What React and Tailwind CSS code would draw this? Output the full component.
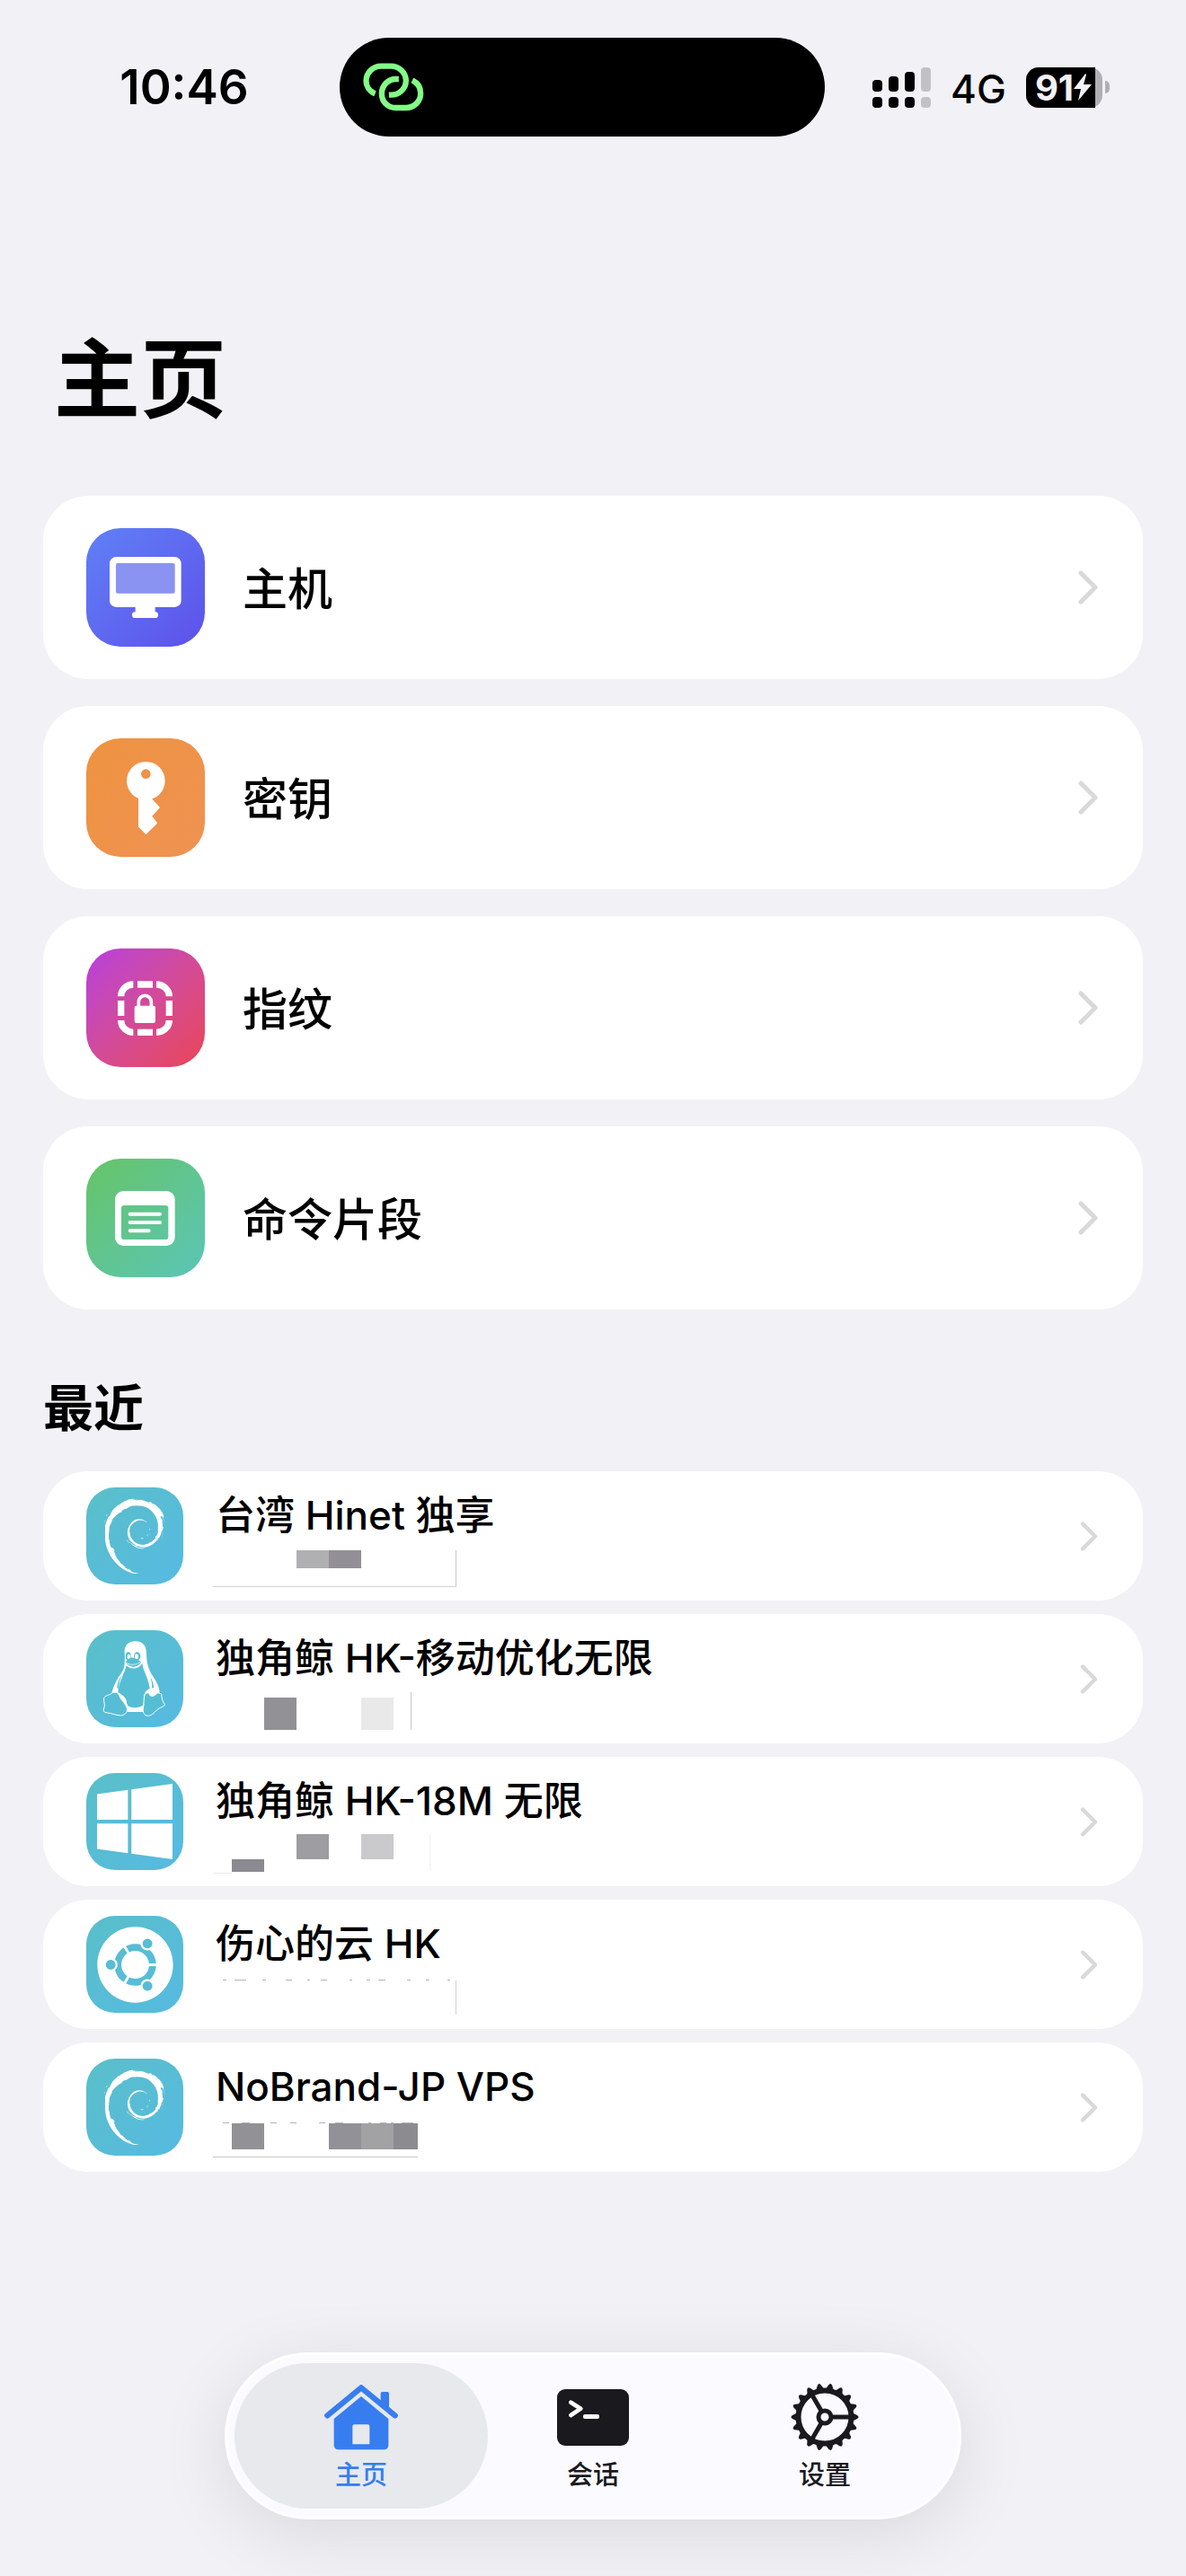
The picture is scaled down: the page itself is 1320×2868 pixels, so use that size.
import { useState } from "react";
import { FaUbuntu, FaWindows } from "react-icons/fa";
import { SiDebian } from "react-icons/si";

const menuItems = [
  { id: "hosts", label: "主机", tile: "bg-linear-to-br from-[#6080f6] to-[#5d50ea]", Icon: MonitorIcon },
  { id: "keys", label: "密钥", tile: "bg-linear-to-br from-[#ee9340] to-[#ef9253]", Icon: KeyIcon },
  { id: "fingerprints", label: "指纹", tile: "bg-linear-to-br from-[#b83ddd] via-[#d34a98] to-[#ea4453]", Icon: LockFrameIcon },
  { id: "snippets", label: "命令片段", tile: "bg-linear-to-br from-[#66c464] to-[#5bc5b6]", Icon: SnippetIcon },
];

// blocks and lines are [x, y, w, h, color], specks are [x1, x2]
const recentHosts = [
  {
    name: "台湾 Hinet 独享",
    Icon: DebianIcon,
    blocks: [[94, 3, 36, 20, "#b0b0b2"], [130, 3, 36, 20, "#929096"]],
    lines: [[271, 3, 1, 41, "#c8c8cb"], [1, 43, 271, 1, "#d2d2d4"]],
    specks: [],
  },
  {
    name: "独角鲸 HK-移动优化无限",
    Icon: TuxIcon,
    blocks: [[58, 8, 36, 36, "#929195"], [166, 8, 36, 36, "#e9e9ea"]],
    lines: [[221, 2, 1, 42, "#c8c8cb"]],
    specks: [],
  },
  {
    name: "独角鲸 HK-18M 无限",
    Icon: WindowsIcon,
    blocks: [[22, 29, 36, 14, "#8b8a90"], [94, 1, 36, 28, "#9e9da2"], [166, 1, 36, 28, "#cacacc"]],
    lines: [[242, 1, 1, 41, "#efeff0"], [1, 44, 21, 1, "#ebebec"]],
    specks: [],
  },
  {
    name: "伤心的云 HK",
    Icon: UbuntuIcon,
    blocks: [],
    lines: [[271, 5, 1, 38, "#d2d2d4"]],
    specks: [[12, 16], [25, 38], [56, 60], [82, 89], [106, 109], [121, 128], [153, 156], [172, 176], [185, 193], [217, 221], [238, 242], [262, 265]],
  },
  {
    name: "NoBrand-JP VPS",
    Icon: DebianIcon,
    blocks: [[22, 5, 36, 29, "#929195"], [130, 5, 36, 29, "#929197"], [166, 5, 36, 29, "#a2a2a4"], [202, 5, 27, 29, "#8c8b90"]],
    lines: [[1, 42, 228, 1, "#c8c8cb"]],
    specks: [[12, 19], [33, 42], [65, 72], [87, 94], [119, 126], [137, 146], [174, 177], [187, 194], [199, 202], [211, 224]],
  },
];

const tabs = [
  { id: "home", label: "主页", Icon: HouseIcon },
  { id: "sessions", label: "会话", Icon: TerminalIcon },
  { id: "settings", label: "设置", Icon: GearIcon },
];

function MonitorIcon() {
  return (
    <svg viewBox="0 0 396 396" className="size-full" fill="white" aria-hidden="true">
      <rect x="78" y="96" width="239" height="168" rx="22" />
      <rect x="99" y="117" width="197" height="101" rx="6" fill="#8a92f2" />
      <rect x="164" y="260" width="66" height="28" />
      <rect x="153" y="280" width="87" height="20" rx="10" />
    </svg>
  );
}

function KeyIcon() {
  return (
    <svg viewBox="0 0 396 396" className="size-full" fill="white" aria-hidden="true">
      <circle cx="199" cy="142" r="64" />
      <path d="M177 190V295L199 317L234 283L216 260L242 231L216 203V180Z" stroke="white" strokeWidth="6" strokeLinejoin="round" />
      <circle cx="199" cy="119" r="16" fill="#ee9348" />
    </svg>
  );
}

function LockFrameIcon() {
  return (
    <svg viewBox="0 0 396 396" className="size-full" fill="none" stroke="white" aria-hidden="true">
      <g strokeWidth="22">
        <path d="M116 160A41 40 0 0 1 157 120" />
        <path d="M234 120A43 40 0 0 1 277 160" />
        <path d="M277 240A43 40 0 0 1 234 280" />
        <path d="M157 280A41 40 0 0 1 116 240" />
        <path d="M171 120H222M171 280H222M116 174V225M277 174V225" />
      </g>
      <path d="M175 198V178A21 21 0 0 1 217 178V198" strokeWidth="11" />
      <rect x="161" y="191" width="70" height="58" rx="7" fill="white" stroke="none" />
    </svg>
  );
}

function SnippetIcon() {
  return (
    <svg viewBox="0 0 396 396" className="size-full" fill="white" aria-hidden="true">
      <path
        fillRule="evenodd"
        d="M124 108H268A28 28 0 0 1 296 136V263A28 28 0 0 1 268 291H124A28 28 0 0 1 96 263V136A28 28 0 0 1 124 108ZM127 156A10 10 0 0 0 117 166V260A10 10 0 0 0 127 270H264A10 10 0 0 0 274 260V166A10 10 0 0 0 264 156Z"
      />
      <path d="M146 185H246M146 213H246M146 241H209" stroke="white" strokeWidth="12" strokeLinecap="round" />
    </svg>
  );
}

function DebianIcon() {
  return <SiDebian className="size-[84px] text-white" aria-hidden="true" />;
}

function WindowsIcon() {
  return <FaWindows className="size-24 text-white" aria-hidden="true" />;
}

function UbuntuIcon() {
  return <FaUbuntu className="size-[87px] text-white" aria-hidden="true" />;
}

function TuxIcon() {
  return (
    <svg viewBox="18 495 324 324" className="size-full" fill="white" aria-hidden="true">
      <path d="M146 568C145 544 160 532 182 532C206 532 219 546 219 572C219 602 225 622 238 645C256 672 266 690 262 716L244 722L208 768H156L120 704L103 712C103 690 122 656 138 634C148 618 147 596 146 568Z" />
      <path d="M152 612C160 626 192 628 205 606C208 632 226 655 230 690C222 694 212 700 211 716L209 745C195 756 170 756 157 748C153 734 140 716 124 702C126 668 146 640 152 612Z" fill="#56bed4" />
      <path d="M121 688C122 670 130 654 137 645C130 660 127 674 125 690ZM231 650C240 664 243 674 243 688L237 688C239 674 236 664 231 650Z" fill="#56bed4" />
      <ellipse cx="158" cy="582" rx="9" ry="14" fill="#56bed4" />
      <ellipse cx="188" cy="582" rx="11" ry="14" fill="#56bed4" />
      <ellipse cx="160" cy="584" rx="5" ry="9" />
      <ellipse cx="186" cy="583" rx="6" ry="9" />
      <path d="M150 600C158 588 172 582 182 590C190 594 198 596 201 602C196 612 180 620 168 616C158 612 150 606 150 600Z" fill="#56bed4" />
      <path d="M151 602C160 611 178 614 200 601" fill="none" stroke="white" strokeWidth="2" />
      <g fill="#56bed4" stroke="white" strokeWidth="3" strokeLinejoin="round">
        <path d="M106 704C94 714 80 712 77 722C75 732 82 744 78 753C74 762 74 768 84 770C102 772 120 780 134 780C150 778 158 766 153 752C143 738 132 706 118 703C112 702 108 702 106 704Z" />
        <path d="M214 708C208 724 212 740 208 756C206 768 210 780 224 781C240 780 248 766 258 758C268 752 282 748 280 742C272 732 270 722 269 708C256 702 228 700 214 708Z" />
      </g>
      <path d="M122 703C138 708 154 724 153 736C148 741 136 733 131 722Z" />
      <path d="M226 698C232 688 250 690 257 704C254 706 250 714 240 717C230 716 224 708 226 698Z" />
    </svg>
  );
}

function HouseIcon() {
  return (
    <svg viewBox="0 0 264 234" className="h-[78px] w-[88px]" fill="currentColor" aria-hidden="true">
      <path d="M19 112L132 19L245 112" fill="none" stroke="currentColor" strokeWidth="19" strokeLinecap="round" strokeLinejoin="round" />
      <path d="M197 80V38Q197 33 202 33H220Q225 33 225 38V90Z" />
      <path fillRule="evenodd" d="M41 123L132 48L223 123V210Q223 226 207 226H57Q41 226 41 210ZM103 148V208H160V148Q160 142 154 142H109Q103 142 103 148Z" />
    </svg>
  );
}

function TerminalIcon() {
  return (
    <svg viewBox="0 0 240 189" className="h-[63px] w-20" aria-hidden="true">
      <rect width="240" height="189" rx="27" fill="currentColor" />
      <path d="M46 44L79 65L46 87" fill="none" stroke="white" strokeWidth="14" strokeLinecap="round" strokeLinejoin="round" />
      <rect x="87" y="84" width="54" height="15" rx="6" fill="white" />
    </svg>
  );
}

function GearIcon() {
  const teeth = Array.from({ length: 18 }, (_, i) => i * 20);
  return (
    <svg viewBox="-39 -39 78 78" className="size-[78px]" fill="none" stroke="currentColor" aria-hidden="true">
      {teeth.map((angle) => (
        <path key={angle} d="M30 -5L36 -2Q39 0 36 2L30 5Z" fill="currentColor" stroke="none" transform={`rotate(${angle})`} />
      ))}
      <circle r="29.5" strokeWidth="6" />
      <circle r="7" strokeWidth="5" />
      {[0, 120, 240].map((angle) => (
        <path key={angle} d="M8 0H28" strokeWidth="5" transform={`rotate(${angle})`} />
      ))}
    </svg>
  );
}

function Chevron({ className }) {
  return (
    <svg viewBox="0 0 22 38" className={className} fill="none" stroke="#d9d9db" strokeWidth="5" strokeLinecap="round" strokeLinejoin="round" aria-hidden="true">
      <path d="M3 3L19 19L3 35" />
    </svg>
  );
}

function StatusBar() {
  return (
    <header className="grid grid-cols-[1fr_540px_1fr] items-center pt-[42px] pr-6">
      <span className="pl-8 text-center text-[53px] leading-[64px] font-semibold">10:46</span>
      <div className="flex h-[110px] items-center rounded-full bg-black pl-[22px]">
        <svg viewBox="120 110 230 180" className="h-[60px] w-[77px]" fill="none" stroke="#83fb86" strokeWidth="19" aria-hidden="true">
          <path d="M172 222C152 214 142 196 142 180C142 152 164 130 192 130H225C253 130 275 152 275 178C275 204 253 226 225 226H218" />
          <path d="M296 177C315 186 324 203 324 221C324 248 302 269 274 269H241C213 269 194 248 194 222C194 195 215 173 241 173H251" />
        </svg>
      </div>
      <div className="flex items-center justify-center gap-[22px] pr-2">
        <svg viewBox="0 0 65 45" className="h-[45px] w-[65px]" aria-hidden="true">
          <rect x="0" y="14" width="11" height="13" rx="4" />
          <rect x="18" y="10" width="11" height="17" rx="4" />
          <rect x="36" y="5" width="11" height="22" rx="4" />
          <rect x="54" y="0" width="11" height="27" rx="4" fill="#c2c1c6" />
          <rect x="0" y="33" width="11" height="12" rx="4" />
          <rect x="18" y="33" width="11" height="12" rx="4" />
          <rect x="36" y="33" width="11" height="12" rx="4" />
          <rect x="54" y="33" width="11" height="12" rx="4" fill="#c2c1c6" />
        </svg>
        <span className="pt-[3px] text-[44px] leading-[56px] font-medium">4G</span>
        <div className="flex items-center gap-[3px]">
          <div className="h-[45px] w-[85px] rounded-[14px] bg-[#b0afb4]">
            <div className="flex h-[45px] w-[77px] items-center rounded-l-[14px] bg-black pl-[10px] text-[#f2f1f6]">
              <span className="text-[40px] leading-[45px] font-bold">91</span>
              <svg viewBox="0 0 20 30" className="h-[30px] w-5 shrink-0" fill="currentColor" aria-hidden="true">
                <path d="M13 0L0 17H8L5 30L20 12H11L14 1Z" />
              </svg>
            </div>
          </div>
          <div className="h-[14px] w-[5px] rounded-r-full bg-[#b0afb4]" />
        </div>
      </div>
    </header>
  );
}

function MaskedAddress({ blocks, lines, specks }) {
  return (
    <svg viewBox="0 0 272 46" className="mt-2 h-[46px] w-[272px]" shapeRendering="crispEdges" aria-hidden="true">
      {[...lines, ...blocks].map(([x, y, w, h, color]) => (
        <rect key={`${x}-${y}`} x={x} y={y} width={w} height={h} fill={color} />
      ))}
      {specks.map(([from, to]) => (
        <rect key={from} x={from} y="4" width={to - from} height="1" fill="#b4b4b7" />
      ))}
    </svg>
  );
}

export default function App() {
  const [activeTab, setActiveTab] = useState("home");

  return (
    <div className="flex min-h-screen flex-col bg-[#f2f1f6] font-['Inter','Noto_Sans_CJK_SC',sans-serif] text-black">
      <StatusBar />

      <main className="px-12">
        <h1 className="mt-[210px] pl-3 text-[96px] leading-[120px] font-bold">主页</h1>

        <div className="mt-[70px] flex flex-col gap-[30px]">
          {menuItems.map(({ id, label, tile, Icon }) => (
            <button key={id} className="flex h-[204px] items-center rounded-[50px] bg-white pr-[50px] pl-12 text-left">
              <span className={`size-[132px] shrink-0 overflow-hidden rounded-[38px] ${tile}`}>
                <Icon />
              </span>
              <span className="ml-[42px] flex-1 pt-1 text-[50px] leading-[72px] font-medium">{label}</span>
              <Chevron className="h-[38px] w-[22px]" />
            </button>
          ))}
        </div>

        <h2 className="mt-[74px] mb-[34px] text-[56px] leading-[72px] font-semibold">最近</h2>

        <div className="flex flex-col gap-[15px]">
          {recentHosts.map(({ name, Icon, blocks, lines, specks }) => (
            <button key={name} className="flex h-36 items-center rounded-[50px] bg-white pr-[50px] pl-12 text-left">
              <span className="flex size-[108px] shrink-0 items-center justify-center overflow-hidden rounded-[32px] bg-linear-to-br from-[#5abfc8] to-[#56bae2]">
                <Icon />
              </span>
              <span className="ml-8 flex flex-1 flex-col self-start pt-[21px]">
                <span className="pl-1 text-[44px] leading-[56px] font-medium">{name}</span>
                <MaskedAddress blocks={blocks} lines={lines} specks={specks} />
              </span>
              <Chevron className="h-[33px] w-5" />
            </button>
          ))}
        </div>
      </main>

      <nav className="mx-auto mt-auto mb-[63px] flex rounded-full border-3 border-white bg-[#fbfaff] px-2 py-[9px] shadow-[0_16px_80px_rgba(0,0,0,0.10)]">
        {tabs.map(({ id, label, Icon }) => (
          <button
            key={id}
            onClick={() => setActiveTab(id)}
            className={`-mr-6 flex h-[162px] w-[282px] flex-col items-center justify-center gap-[6px] rounded-full pt-1 last:mr-0 ${activeTab === id ? "bg-[#e7e9ec] text-[#377df0]" : "text-[#1a191e]"}`}
          >
            <span className="flex h-[78px] items-center">
              <Icon />
            </span>
            <span className="text-[29px] leading-10 font-medium">{label}</span>
          </button>
        ))}
      </nav>
    </div>
  );
}
